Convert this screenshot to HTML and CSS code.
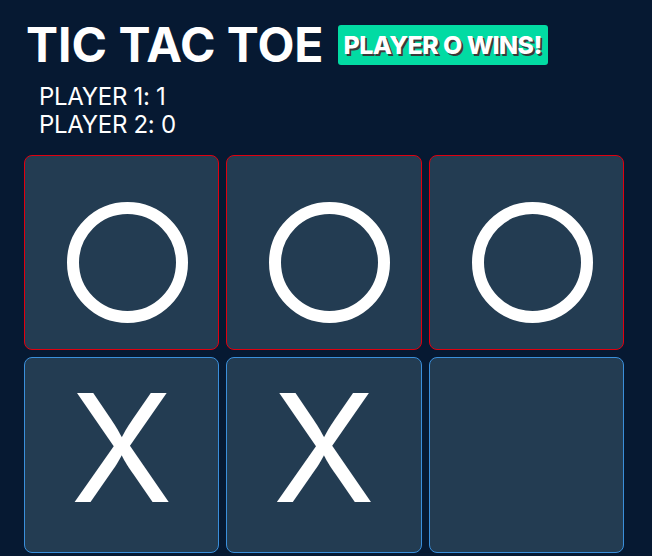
FILE: index.html
```html
<!DOCTYPE html>
<html>
<head>
<meta charset="utf-8">
<link rel="stylesheet" href="styles.css">
</head>
<body>
<div class="app">
  <header class="header">
    <h1 class="title">TIC TAC TOE</h1>
    <div class="badge">PLAYER O WINS!</div>
  </header>
  <div class="scores">
    <div class="score">PLAYER 1: 1</div>
    <div class="score">PLAYER 2: 0</div>
  </div>
  <div class="board">
    <div class="cell win"><span class="ring"></span></div>
    <div class="cell win"><span class="ring"></span></div>
    <div class="cell win"><span class="ring"></span></div>
    <div class="cell"><span class="cross">X</span></div>
    <div class="cell"><span class="cross">X</span></div>
    <div class="cell"></div>
  </div>
</div>
</body>
</html>
```

FILE: styles.css
```css
* { box-sizing: border-box; }
html, body {
  margin: 0;
  padding: 0;
  background: #061932;
  height: 100%;
  overflow: hidden;
}
body {
  font-family: Inter, "Liberation Sans", sans-serif;
  color: #ffffff;
}
.app {
  padding: 16px 24px 0 24px;
  width: 648px;
}
.header {
  display: flex;
  align-items: center;
  gap: 14px;
  padding-left: 2px;
}
.title {
  margin: 0;
  font-size: 48px;
  font-weight: 700;
  line-height: 58px;
  letter-spacing: 0;
}
.badge {
  background: #02dba3;
  border-radius: 3px;
  height: 40px;
  padding: 0 6px;
  display: flex;
  align-items: center;
  font-size: 25px;
  font-weight: 800;
  letter-spacing: -0.6px;
  text-shadow: 2px 2px 0 #3a3a3a;
}
.scores {
  margin-top: 9px;
  padding-left: 15px;
  font-size: 24px;
  line-height: 28px;
  font-weight: 400;
  letter-spacing: -0.3px;
}
.board {
  margin-top: 16px;
  width: 600px;
  display: grid;
  grid-template-columns: repeat(3, 1fr);
  gap: 7px;
}
.cell {
  aspect-ratio: 1 / 1;
  background: #233c52;
  border: 1px solid #3a8fdb;
  border-radius: 8px;
  display: flex;
  align-items: center;
  justify-content: center;
}
.cell.win {
  border-color: #e0000f;
}
.ring {
  width: 121px;
  height: 121px;
  border: 12.5px solid #ffffff;
  border-radius: 50%;
  margin: 20px 0 0 12px;
}
.cross {
  font-size: 150px;
  line-height: 1;
  font-weight: 400;
  margin-bottom: 14px;
}
```
